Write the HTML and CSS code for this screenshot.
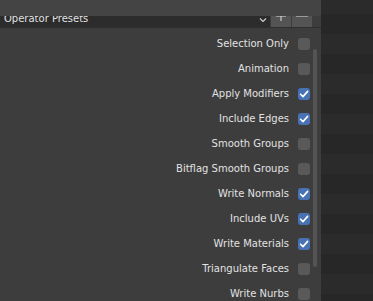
FILE: index.html
```html
<!DOCTYPE html>
<html lang="en">
<head>
  <meta charset="UTF-8" />
  <title>Export OBJ</title>
  <link rel="stylesheet" href="styles.css">
</head>
<body>
  <div class="panel">
    <div class="panel-head"></div>
    <div class="presets">
      <div class="preset-field">
        <span class="preset-name">Operator Presets</span>
        <svg class="chevron" width="8" height="6" viewBox="0 0 8 6"><path d="M1 1.5 L4 4.5 L7 1.5" fill="none" stroke="#cfcfcf" stroke-width="1.2"/></svg>
      </div>
      <div class="preset-btn">
        <svg width="10" height="10" viewBox="0 0 10 10"><path d="M5 0 V10 M0 5 H10" stroke="#e0e0e0" stroke-width="1"/></svg>
      </div>
      <div class="preset-btn">
        <svg width="12" height="10" viewBox="0 0 12 10"><path d="M0 5 H12" stroke="#e0e0e0" stroke-width="1"/></svg>
      </div>
    </div>

    <div class="body">
      <div class="options" id="options"></div>
      <div class="scroll"><div class="scroll-thumb"></div></div>
    </div>
  </div>

  <script>
    const options = [
      ["Selection Only", false],
      ["Animation", false],
      ["Apply Modifiers", true],
      ["Include Edges", true],
      ["Smooth Groups", false],
      ["Bitflag Smooth Groups", false],
      ["Write Normals", true],
      ["Include UVs", true],
      ["Write Materials", true],
      ["Triangulate Faces", false],
      ["Write Nurbs", false]
    ];

    const list = document.getElementById("options");

    options.forEach(([label, on]) => {
      const row = document.createElement("div");
      row.classList.add("option");
      row.innerHTML = `
        <span class="label">${label}</span>
        <span class="check ${on ? "on" : ""}">
          ${on ? '<svg width="12" height="12" viewBox="0 0 12 12"><path d="M2.6 6.2 L5 8.6 L9.6 3.4" fill="none" stroke="#fff" stroke-width="1.6" stroke-linecap="round" stroke-linejoin="round"/></svg>' : ""}
        </span>
      `;
      list.appendChild(row);
    });
  </script>
</body>
</html>
```

FILE: styles.css
```css
* { margin: 0; padding: 0; box-sizing: border-box; }

body {
  width: 373px;
  height: 301px;
  overflow: hidden;
  font-family: "DejaVu Sans", sans-serif;
  font-size: 10px;
  color: #e2e2e2;
  background: repeating-linear-gradient(
    #2b2b2b 0px, #2b2b2b 7px,
    #272727 7px, #272727 27px,
    #2b2b2b 27px, #2b2b2b 47px
  );
  background-size: 100% 40px;
  background-position: 0 7px;
}

.panel {
  width: 321px;
  height: 301px;
  background: #3d3d3d;
  display: flex;
  flex-direction: column;
  overflow: hidden;
}

.panel-head {
  flex-shrink: 0;
  height: 16px;
  background: #444444;
}

.presets {
  flex-shrink: 0;
  display: flex;
  height: 12px;
  border-bottom: 1px solid #2e2e2e;
}

.preset-field {
  flex: 1;
  display: flex;
  justify-content: space-between;
  background: #2c2c2c;
  overflow: hidden;
  padding: 0 3px 0 4px;
}

.preset-name {
  display: block;
  line-height: 12px;
  margin-top: -3px;
}

.chevron {
  margin-top: 1px;
}

.preset-btn {
  width: 20px;
  margin-left: 1px;
  background: #545454;
  display: flex;
  justify-content: center;
  overflow: hidden;
}

.preset-btn svg {
  margin-top: -5px;
}

.preset-btn:last-child {
  margin-right: 9px;
}

.body {
  flex: 1;
  display: flex;
  min-height: 0;
}

.options {
  width: 310px;
  padding-top: 3px;
  flex-shrink: 0;
}

.option {
  height: 25px;
  display: flex;
  justify-content: flex-end;
  align-items: center;
  gap: 9px;
}

.check {
  width: 12px;
  height: 12px;
  border-radius: 3px;
  background: #595959;
  display: flex;
}

.check.on {
  background: #4772b3;
}

.scroll {
  width: 11px;
  padding: 21px 4px 0 3px;
}

.scroll-thumb {
  height: 218px;
  border-radius: 2px;
  background: #545454;
}
```
